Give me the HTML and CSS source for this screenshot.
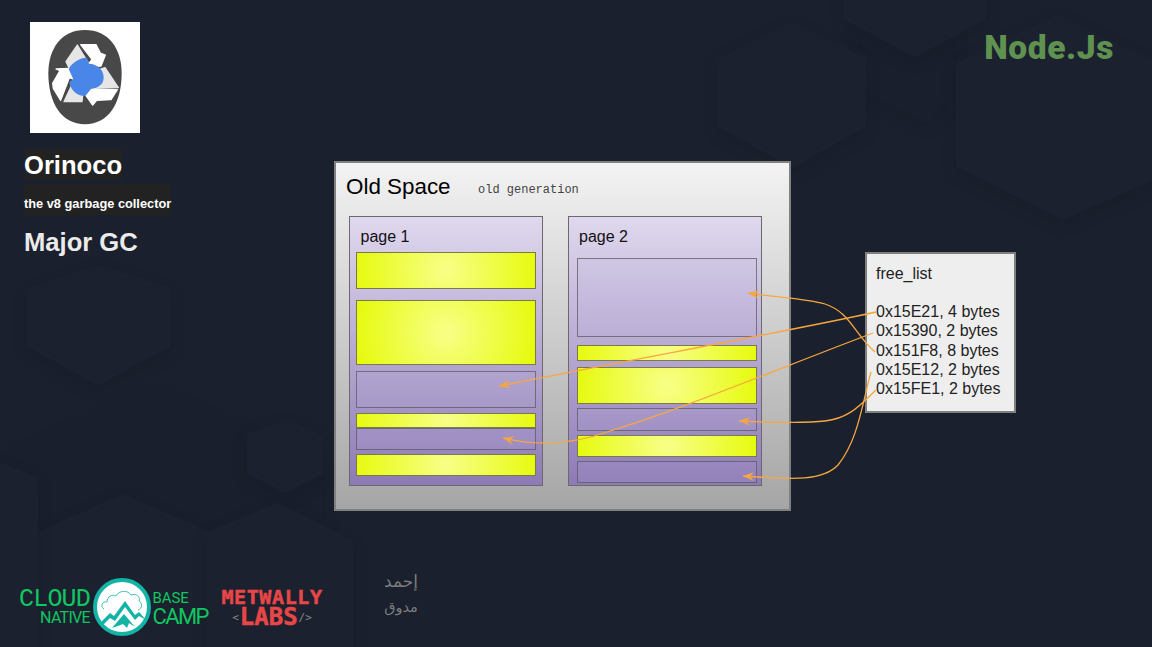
FILE: index.html
```html
<!DOCTYPE html>
<html lang="en">
<head>
<meta charset="utf-8">
<title>Orinoco Major GC</title>
<link rel="stylesheet" href="styles.css">
</head>
<body>
<div class="stage">
  <svg class="hexes" viewBox="0 0 1152 647" aria-hidden="true">
    <polygon class="hex hex-dim" points="13,453 157,391 250,432 322,470 322,560 157,640 13,560"/>
    <polygon class="hex" points="250,436 285,422 320,438 320,472 285,490 250,472"/>
    <polygon class="hex" points="100,268 168,290 168,345 98,382 30,345 30,290"/>
    <polygon class="hex" points="123,497 208,534 208,680 40,680 40,534"/>
    <polygon class="hex" points="277,506 350,542 350,680 210,680 210,534"/>
    <polygon class="hex" points="-30,452 35,480 35,680 -30,680"/>
    <polygon class="hex hex-dim" points="855,-40 952,-40 952,92 927,122 868,92"/>
    <polygon class="hex" points="793,25 863,60 863,125 793,165 720,125 720,60"/>
    <polygon class="hex" points="847,-60 983,-60 983,18 915,54 847,18"/>
    <polygon class="hex" points="1058,18 1170,72 1170,170 1062,217 959,165 959,65"/>
  </svg>

  <div class="top">
    <aside class="sidebar">
      <div class="logo-card">
        <svg class="recycle" viewBox="-30 -9 330 333" role="img" aria-label="Orinoco logo">
          <path class="r-body" d="M135,15 C205,15 245,70 245,145 C245,235 205,298 135,298 C65,298 25,235 25,145 C25,70 65,15 135,15Z"/>
          <polygon class="r-light" points="78,110 112,60 155,130 120,150 88,130"/>
          <polygon class="r-white" points="122,59 168,59 181,84 196,90 183,123 140,125 156,103"/>
          <polygon class="r-light" points="195,128 235,188 165,190 160,140"/>
          <polygon class="r-white" points="232,194 213,224 170,226 158,240 137,210 160,177 165,194"/>
          <polygon class="r-light" points="126,230 72,230 100,170 130,190"/>
          <polygon class="r-white" points="62,226 40,190 38,175 60,137 48,132 85,130 108,165 88,158"/>
          <path class="r-blue" d="M86,132 C96,112 122,97 141,98 L147,116 C172,117 192,134 191,160 C190,180 172,190 153,192 L136,213 C110,213 92,196 88,171 L100,163Z"/>
        </svg>
      </div>
      <h1 class="title"><span class="chip">Orinoco</span></h1>
      <p class="subtitle"><span class="chip">the v8 garbage collector</span></p>
      <h2 class="section">Major GC</h2>
    </aside>

    <section class="old-space">
      <div class="space-head">
        <span class="space-name">Old Space</span>
        <span class="space-note">old generation</span>
      </div>
      <div class="pages">
        <div class="page page-one">
          <div class="page-label">page 1</div>
          <div class="block used h37"></div>
          <div class="block used h65 g11"></div>
          <div class="block free h37 g6"></div>
          <div class="block used h15 g5"></div>
          <div class="block free h22"></div>
          <div class="block used h22 g4"></div>
        </div>
        <div class="page page-two">
          <div class="page-label label-tall">page 2</div>
          <div class="block free h79"></div>
          <div class="block used h16 g8"></div>
          <div class="block used h37 g6"></div>
          <div class="block free h23 g4"></div>
          <div class="block used h22 g4"></div>
          <div class="block free h22 g4"></div>
        </div>
      </div>
    </section>

    <div class="right-col">
      <div class="tech">Node.Js</div>
      <div class="free-list">
        <div class="list-title">free_list</div>
        <div>0x15E21, 4 bytes</div>
        <div>0x15390, 2 bytes</div>
        <div>0x151F8, 8 bytes</div>
        <div>0x15E12, 2 bytes</div>
        <div>0x15FE1, 2 bytes</div>
      </div>
    </div>
  </div>

  <footer class="footer">
    <div class="cn-left">
      <div class="cn-cloud">CLOUD</div>
      <div class="cn-native">NATIVE</div>
    </div>
    <svg class="cn-badge" viewBox="0 0 58 58" role="img" aria-label="Cloud Native Base Camp logo">
      <circle class="cn-ring" cx="29" cy="29" r="27"/>
      <path class="cn-cloudline" d="M11,31 C7,28 9,23 14,24 C14,18 20,16 23,18 C26,12 35,12 38,17 C43,15 48,19 46,23 C50,25 49,31 45,32"/>
      <path class="cn-mount" d="M6,46 L17,35 L21,38 L32,23 L42,37 L46,34 L53,42 L46,38 L42,42 L32,29 L22,43 L17,40 L11,46Z"/>
      <path class="cn-mount" d="M19,50 L31,36 L42,49 L36,45 L34,50 L30,46 L25,48Z"/>
    </svg>
    <div class="cn-right">
      <div class="cn-base">BASE</div>
      <div class="cn-camp">CAMP</div>
    </div>
    <div class="metwally">
      <div class="mw-top">METWALLY</div>
      <div class="mw-bottom"><span class="mw-tag">&lt;</span><span class="mw-labs">LABS</span><span class="mw-tag">/&gt;</span></div>
    </div>
    <div class="arabic" lang="ar" dir="rtl">
      <div>إحمد</div>
      <div class="arabic-small">مدوق</div>
    </div>
  </footer>

  <svg class="arrows" viewBox="0 0 1152 647" aria-hidden="true">
    <defs>
      <marker id="head" viewBox="0 0 12 10" refX="11" refY="5" markerUnits="userSpaceOnUse" markerWidth="12" markerHeight="10" orient="auto">
        <path class="arrow-head" d="M11,5 L0,0.5 L4,5 L0,9.5Z"/>
      </marker>
    </defs>
    <path class="arrow" marker-end="url(#head)" d="M876,312 C800,329 640,358 499,386"/>
    <path class="arrow" marker-end="url(#head)" d="M873,333 C780,368 680,410 610,431 C580,442 545,448 503,438"/>
    <path class="arrow" marker-end="url(#head)" d="M875,352 C855,335 850,312 825,304 C805,298 780,298 748,293"/>
    <path class="arrow" marker-end="url(#head)" d="M876,390 C860,405 850,418 825,421 C800,424 770,422 739,421"/>
    <path class="arrow" marker-end="url(#head)" d="M871,372 C862,405 858,440 838,465 C820,484 780,478 743,476"/>
  </svg>
</div>
</body>
</html>
```
FILE: styles.css
```css
* { box-sizing: border-box; }
html, body { margin: 0; padding: 0; }
body { background: #1a202d; font-family: "Liberation Sans", Arial, sans-serif; }

.stage {
  position: relative;
  width: 1152px;
  height: 647px;
  overflow: hidden;
  display: flex;
  flex-direction: column;
  background: #1a202d;
}
.hexes, .arrows {
  position: absolute;
  left: 0;
  top: 0;
  width: 1152px;
  height: 647px;
}
.arrows { z-index: 3; pointer-events: none; }
.hex {
  fill: #1b212f;
  stroke: #1b212f;
  stroke-width: 6;
  stroke-linejoin: round;
  filter: drop-shadow(0 5px 7px rgba(14, 18, 28, 0.2));
}
.hex-dim { fill: #191f2c; stroke: #1b2130; stroke-width: 1.5; }

.top {
  position: relative;
  z-index: 1;
  height: 560px;
  display: grid;
  grid-template-columns: 334px 457px 1fr;
}

/* sidebar */
.sidebar { padding: 22px 0 0 24px; }
.logo-card {
  width: 110px;
  height: 111px;
  margin-left: 6px;
  background: #fff;
}
.recycle { display: block; width: 110px; height: 111px; }
.r-body { fill: #484848; }
.r-light { fill: #e6e6e6; stroke: #e6e6e6; stroke-width: 4; stroke-linejoin: round; }
.r-white { fill: #fff; stroke: #fff; stroke-width: 4; stroke-linejoin: round; }
.r-blue { fill: #4a86e8; }
.title, .subtitle, .section { margin: 0; font-weight: 700; }
.title {
  margin-top: 16px;
  font-size: 25.6px;
  color: #fff;
}
.title .chip { height: 30.5px; line-height: 32px; }
.subtitle {
  margin-top: 4.5px;
  font-size: 12.8px;
  color: #fff;
}
.subtitle .chip { height: 31px; line-height: 40px; }
.chip { display: block; width: max-content; background: #222; }
.section {
  margin-top: 12px;
  font-size: 25.6px;
  line-height: 30px;
  color: #ebebeb;
}

/* old space */
.old-space {
  margin-top: 161px;
  height: 350px;
  padding: 0 13px;
  border: 2px solid #808080;
  background: linear-gradient(#f3f3f3, #a5a5a5);
  color: #000;
}
.space-head {
  display: flex;
  align-items: center;
  height: 48px;
  margin-left: -3px;
  margin-bottom: 5px;
}
.space-name { font-size: 22.4px; width: 132px; }
.space-note {
  font-family: "Liberation Mono", "Courier New", monospace;
  font-size: 12px;
  color: #444;
  padding-top: 6px;
}
.pages { display: flex; gap: 25px; }
.page {
  width: 194px;
  height: 270px;
  border: 1.5px solid #6a6a6a;
  background: linear-gradient(#e0d8ee, #8d7ab6);
  display: flex;
  flex-direction: column;
}
.page-one { padding: 0 6px; }
.page-two { padding: 0 3.8px 0 7.5px; }
.page-label {
  height: 34.5px;
  padding-left: 4.5px;
  font-size: 16px;
  line-height: 40px;
  color: #111;
}
.label-tall { height: 40.5px; padding-left: 2.5px; }
.block { flex: none; border: 1.5px solid #6f6f6f; }
.used { background: radial-gradient(circle 92px at center, #f8ff88, #e6fa0c); border-color: rgba(100, 100, 80, 0.85); }
.free { background: rgba(190, 180, 220, 0.12); border-color: rgba(85, 85, 90, 0.7); }
.h15 { height: 15px; }
.h16 { height: 16px; }
.h22 { height: 22px; }
.h23 { height: 23px; }
.h37 { height: 37px; }
.h65 { height: 65px; }
.h79 { height: 79px; }
.g4 { margin-top: 4px; }
.g5 { margin-top: 5px; }
.g6 { margin-top: 6px; }
.g8 { margin-top: 8px; }
.g11 { margin-top: 11px; }

/* right column */
.right-col { display: flex; flex-direction: column; }
.tech {
  height: 252px;
  padding: 26px 38px 0 0;
  text-align: right;
  font-family: Roboto, "Noto Sans", sans-serif;
  font-weight: 900;
  font-size: 33.5px;
  line-height: 43px;
  letter-spacing: 0.6px;
  color: #5f9150;
}
.free-list {
  width: 151px;
  height: 161px;
  margin-left: 74px;
  padding: 9.8px 9px 0;
  border: 2px solid #7f7f7f;
  background: #eee;
  font-size: 16px;
  line-height: 19.2px;
  color: #222;
  white-space: nowrap;
}
.list-title { margin-bottom: 19.2px; }

/* footer logos */
.footer {
  position: relative;
  z-index: 1;
  display: flex;
  align-items: flex-start;
  height: 87px;
  padding: 8px 0 0 17px;
}
.cn-left { width: 73px; margin-top: 22px; text-align: right; color: #10c660; font-family: Roboto, sans-serif; font-weight: 300; }
.cn-cloud {
  font-family: "Liberation Mono", monospace;
  font-weight: 400;
  font-size: 25px;
  line-height: 20px;
  letter-spacing: -0.8px;
  white-space: nowrap;
}
.cn-native { font-size: 16px; line-height: 15px; font-weight: 400; letter-spacing: -0.7px; }
.cn-badge { display: block; width: 58px; height: 58px; margin: 10px 0 0 2.5px; }
.cn-ring { fill: #fff; stroke: #13b3a6; stroke-width: 4; }
.cn-cloudline { fill: none; stroke: #2bb9ad; stroke-width: 0.9; }
.cn-mount { fill: #13b3a6; }
.cn-right { width: 68.5px; margin: 23px 0 0 2px; color: #10c660; font-family: Roboto, sans-serif; }
.cn-base { font-size: 15px; line-height: 14px; font-weight: 400; letter-spacing: -0.1px; }
.cn-camp { font-size: 22px; line-height: 23px; font-weight: 400; letter-spacing: -1.6px; }
.metwally {
  width: 110px;
  margin-top: 20px;
  font-family: "DejaVu Sans Mono", monospace;
  font-weight: 700;
  color: #e84747;
  text-align: center;
  white-space: nowrap;
  -webkit-text-stroke: 0.5px #e84747;
}
.mw-top { font-size: 20px; line-height: 19px; letter-spacing: 0.6px; width: 102px; }
.mw-bottom { display: flex; justify-content: center; align-items: center; width: 102px; height: 20px; }
.mw-labs { font-size: 24px; line-height: 20px; margin: 0 1px; }
.mw-tag { font-size: 11px; font-weight: 400; color: #8a8a8a; -webkit-text-stroke: 0; }
.arabic {
  width: 34px;
  margin-left: 53px;
  font-family: "DejaVu Sans", sans-serif;
  font-size: 17px;
  line-height: 26px;
  color: #7d7d7d;
  text-align: center;
}
.arabic-small { font-size: 14.5px; white-space: nowrap; }

/* arrows */
.arrow { fill: none; stroke: #f7a740; stroke-width: 1.3; }
.arrow-head { fill: #f7a740; }
```
